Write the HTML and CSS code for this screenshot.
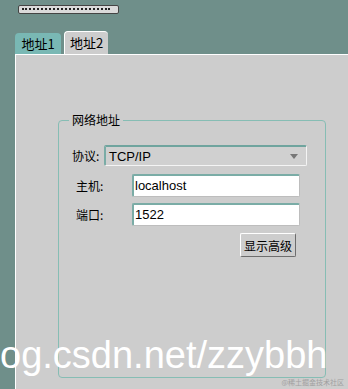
FILE: index.html
```html
<!DOCTYPE html>
<html lang="zh">
<head>
<meta charset="utf-8">
<link rel="stylesheet" href="styles.css">
</head>
<body>
<div class="topbar"><div class="dots"></div></div>
<div class="tabs">
  <div class="tab tab-off">地址1</div>
  <div class="tab tab-on">地址2</div>
</div>
<div class="panel">
  <fieldset class="group">
    <legend>网络地址</legend>
    <div class="row row-proto">
      <span class="label">协议:</span>
      <div class="combo"><span>TCP/IP</span><span class="arrow"></span></div>
    </div>
    <div class="row row-host">
      <span class="label">主机:</span>
      <div class="input">localhost</div>
    </div>
    <div class="row row-port">
      <span class="label">端口:</span>
      <div class="input">1522</div>
    </div>
    <div class="row row-btn">
      <div class="button">显示高级</div>
    </div>
  </fieldset>
</div>
<div class="wm">og.csdn.net/zzybbh</div>
<div class="wm-small">@稀土掘金技术社区</div>
</body>
</html>
```
FILE: styles.css
```css
html, body {
  margin: 0;
  padding: 0;
}
body {
  width: 348px;
  height: 389px;
  overflow: hidden;
  background: #6f8f8a;
  font-family: "Noto Sans CJK SC", "Liberation Sans", sans-serif;
  font-size: 12px;
  font-weight: 400;
  color: #000;
  position: relative;
  padding-top: 5px;
  box-sizing: border-box;
}
.topbar {
  margin-left: 18px;
  width: 101px;
  height: 9px;
  box-sizing: border-box;
  border: 1px solid #444;
  border-radius: 2px;
  background: #dadada;
  padding: 2px 8px 0 3px;
}
.dots {
  border-top: 2px dotted #222;
}
.tabs {
  display: flex;
  align-items: flex-end;
  margin-top: 17px;
  padding-left: 15px;
  height: 23px;
}
.tab {
  box-sizing: border-box;
  display: flex;
  align-items: center;
  justify-content: center;
  line-height: 14px;
  font-size: 13px;
  border-radius: 4px 4px 0 0;
}
.tab-off {
  width: 46px;
  height: 21px;
  background: #79b8b4;
  padding-top: 1px;
}
.tab-on {
  width: 44px;
  height: 23px;
  margin-left: 3px;
  background: #cdcdcd;
  border-top: 1px solid #fff;
  border-left: 1px solid #fff;
  padding-bottom: 1px;
}
.panel {
  margin-left: 15px;
  height: 335px;
  background: #cdcdcd;
  border-top: 1px solid #fff;
  border-left: 1px solid #fff;
  box-sizing: border-box;
  padding-top: 57px;
  padding-left: 42px;
}
.group {
  margin: 0;
  padding: 0;
  width: 268px;
  height: 266px;
  box-sizing: border-box;
  border: 1px solid #86bdb4;
  border-radius: 4px;
  min-width: 0;
}
.group legend {
  margin-left: 10px;
  padding: 0 3px;
  line-height: 16px;
  font-size: 12px;
}
.row {
  display: flex;
  align-items: center;
}
.label {
  font-size: 12px;
  line-height: 14px;
}
.row-proto {
  margin-top: 17px;
}
.row-proto .label {
  margin-left: 13px;
  width: 32px;
}
.combo {
  box-sizing: border-box;
  width: 203px;
  height: 21px;
  display: flex;
  align-items: center;
  justify-content: space-between;
  padding: 0 8px 0 3px;
  background: #d0d0d0;
  border-top: 2px solid #6fa49e;
  border-left: 2px solid #7aaca6;
  border-right: 1px solid #f4f4f4;
  border-bottom: 1px solid #f4f4f4;
  border-radius: 2px;
  font-family: "Liberation Sans", sans-serif;
  font-size: 13px;
}
.arrow {
  width: 0;
  height: 0;
  border-left: 4px solid transparent;
  border-right: 4px solid transparent;
  border-top: 5px solid #777;
}
.row-host, .row-port {
  height: 23px;
}
.row-host { margin-top: 8px; }
.row-port { margin-top: 6px; }
.row-host .label, .row-port .label {
  margin-left: 17px;
  width: 56px;
}
.input {
  box-sizing: border-box;
  width: 168px;
  height: 23px;
  background: #fff;
  border-top: 2px solid #7aaca6;
  border-left: 2px solid #7aaca6;
  border-right: 1px solid #bdbdbd;
  border-bottom: 1px solid #bdbdbd;
  border-radius: 2px;
  padding-left: 1px;
  font-family: "Liberation Sans", sans-serif;
  font-size: 13px;
  line-height: 19px;
}
.row-btn {
  margin-top: 7px;
  padding-left: 181px;
}
.button {
  box-sizing: border-box;
  width: 56px;
  height: 24px;
  display: flex;
  align-items: center;
  justify-content: center;
  background: #cdcdcd;
  border-top: 1px solid #fff;
  border-left: 1px solid #fff;
  border-right: 1px solid #6d6d6d;
  border-bottom: 1px solid #6d6d6d;
  border-radius: 2px;
  font-size: 12px;
}
.wm {
  position: absolute;
  left: 0;
  top: 334px;
  font-family: "Liberation Sans", sans-serif;
  font-size: 38px;
  color: #fff;
  white-space: nowrap;
}
.wm-small {
  position: absolute;
  right: 4px;
  bottom: 3px;
  font-size: 7px;
  line-height: 8px;
  color: #a0a0a0;
  white-space: nowrap;
}
```
